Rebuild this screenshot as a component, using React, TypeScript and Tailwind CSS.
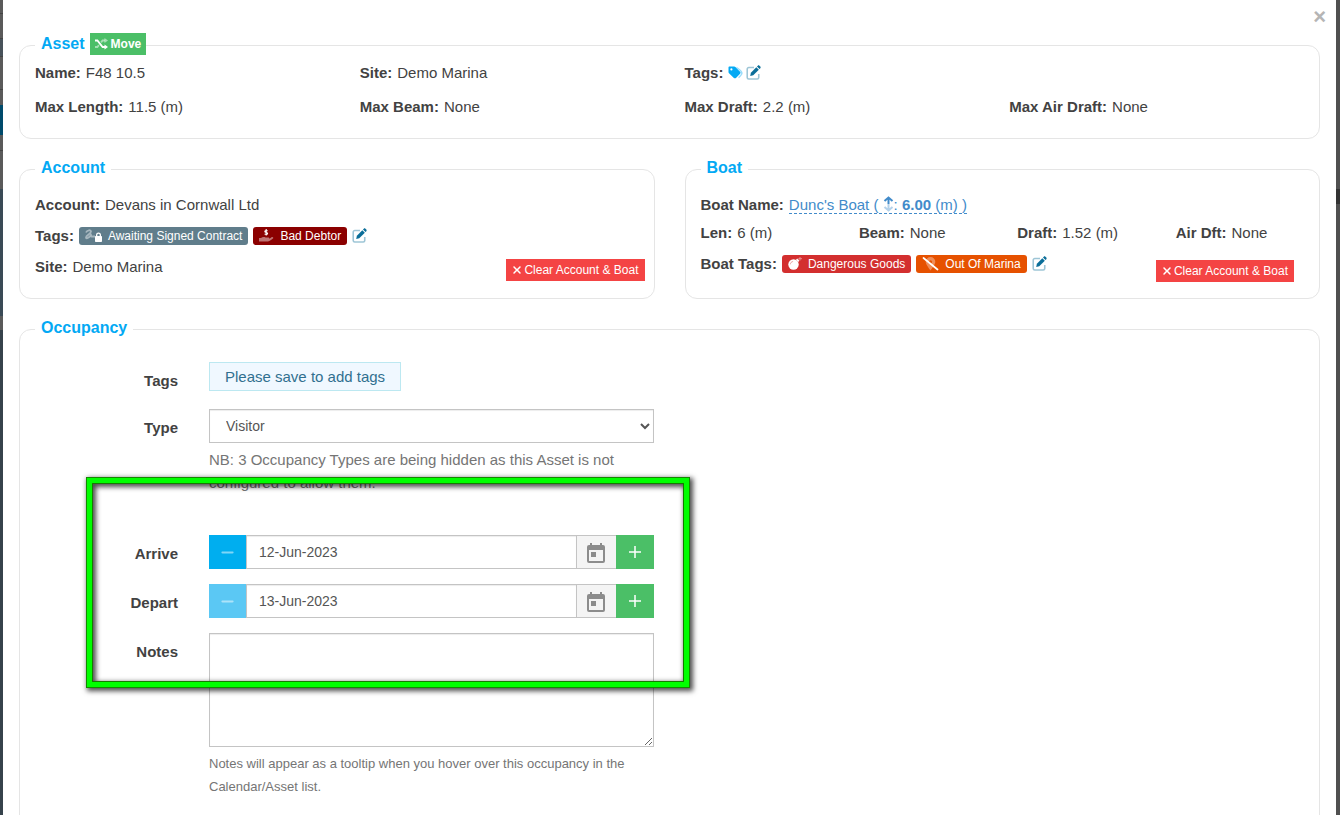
import type { ReactNode } from 'react';
import { FaXmark, FaMinus } from 'react-icons/fa6';

const panel = 'min-w-0 rounded-[12px] border border-[#e5e5e5] pb-4';
const label = 'text-right text-[15px] leading-[23px] font-bold';
const field = 'border border-[#c4c4c4] bg-white text-[14px] text-[#555] shadow-[inset_0_1px_1px_rgba(0,0,0,0.075)] outline-none';

function Legend({ children }: { children: ReactNode }) {
  return (
    <legend className="ml-[15px] flex h-6 items-start gap-[5px] px-[6px] text-[16px] leading-[21px] font-bold text-[#03a9f4]">
      {children}
    </legend>
  );
}

function Fact({ name, children }: { name: string; children: ReactNode }) {
  return (
    <div className="flex items-center gap-[5px] px-[15px]">
      <b>{name}:</b>
      {children}
    </div>
  );
}

function ShuffleIcon() {
  return (
    <svg viewBox="0 0 13 12" className="h-3 w-[13px]" fill="none" stroke="currentColor" strokeWidth="1.8">
      <path d="M0 9h2.400l1.500-1.800M6.100 4.400 7.600 2.500H10" opacity=".5" />
      <path d="M9.500 0 13 2.500 9.500 5z" fill="currentColor" stroke="none" opacity=".5" />
      <path d="M0 2.500h2.400L7.600 9H10" />
      <path d="M9.500 6.500 13 9l-3.500 2.500z" fill="currentColor" stroke="none" />
    </svg>
  );
}

function TagsIcon() {
  return (
    <svg viewBox="0 0 15 13" className="h-[13px] w-[15px]" fill="#03a9f4">
      <path d="M8.500 .8c3 1.700 5.900 4 6.200 6.200.1 1.500-2 3.500-3.700 5.200l-.9-.9c1.600-1.600 3.100-3.200 3-4.300C12.900 5.500 10.500 3.500 8.500 2z" opacity=".4" />
      <path fillRule="evenodd" d="M.5 1.500C.5.900.9.500 1.500.500h4.700c.5 0 .9.200 1.200.500l4.700 4.700c.6.600.6 1.500 0 2.100l-4.100 4.100c-.6.600-1.500.600-2.100 0L1 7.200C.7 6.900.5 6.500.5 6zM3.400 2.300a1.100 1.100 0 1 0 0 2.200 1.100 1.100 0 0 0 0-2.200z" />
    </svg>
  );
}

function EditIcon() {
  return (
    <svg viewBox="0 0 16 16" className="h-[15px] w-[15px]" fill="none">
      <path d="M8.500 2.700H3A1.700 1.700 0 0 0 1.300 4.400v8.900A1.700 1.700 0 0 0 3 15h8.900a1.700 1.700 0 0 0 1.700-1.700V9.500" stroke="#0b6e99" strokeOpacity=".4" strokeWidth="1.700" />
      <path d="m11 2.300 2.700 2.700-6 6L4.500 11.700 5.200 8.300z" fill="#0b6e99" />
      <path d="m11.700 1.600.9-.9c.5-.5 1.200-.5 1.700 0l1 1c.5.500.5 1.200 0 1.700l-.9.900z" fill="#0b6e99" />
    </svg>
  );
}

function EditTags({ name }: { name: string }) {
  return (
    <button type="button" aria-label={name} className="cursor-pointer">
      <EditIcon />
    </button>
  );
}

function SignatureLockIcon() {
  return (
    <svg viewBox="0 0 17 13" className="h-[13px] w-[17px]">
      <path d="M1 3.500C2 1 6 .5 6 2.500 6 5 1 6.500 1 8.500c0 2 4-.5 5-2.500.5 1 0 2 1.500 1.500H10" fill="none" stroke="#fff" strokeWidth="1.800" opacity=".45" />
      <path fillRule="evenodd" d="M11 7V6a2.500 2.500 0 0 1 5 0v1c.6 0 1 .4 1 1v4c0 .6-.4 1-1 1h-5c-.6 0-1-.4-1-1V8c0-.6.4-1 1-1zm1.300 0h2.400V6a1.200 1.200 0 0 0-2.400 0z" fill="#fff" />
    </svg>
  );
}

function HandDollarIcon() {
  return (
    <svg viewBox="0 0 15 13" className="h-[13px] w-[15px]">
      <path d="M0 9h2c1.500-1.200 3-1.300 4.500-.6h3c.9 0 .9 1.400 0 1.400H7.500c2 .3 3.500-.5 5-1.600 1.200-.9 2.400.5 1.400 1.400-1.600 1.300-3 2.600-4.900 3H0z" fill="#fff" opacity=".45" />
      <path d="M8.700 1.900C7.700 1.300 5.800 1.200 5.800 2.400c0 1.300 2.800.8 2.800 2 0 1.300-2 1.100-3 .6M7.200 0v6.500" stroke="#fff" strokeWidth="1.100" fill="none" />
    </svg>
  );
}

function BombIcon() {
  return (
    <svg viewBox="0 0 14 14" className="h-[14px] w-[14px]" fill="#fff">
      <circle cx="5.500" cy="7.500" r="5.200" />
      <path d="m8 2.800 1.200-1.200L11.400 3.800 10.200 5z" />
      <path d="m10.500 2 1.300-.6M12 0v3.500M14 1.700h-3.500" stroke="#fff" strokeWidth="1" opacity=".45" />
      <path d="M2.400 7.300c0-1.500 1-2.700 2.700-2.800" stroke="#d32f2f" strokeWidth=".8" fill="none" opacity=".5" />
    </svg>
  );
}

function LocationSlashIcon() {
  return (
    <svg viewBox="0 0 17 14" className="h-[14px] w-[17px]">
      <path fillRule="evenodd" d="M8.500 0a4.800 4.800 0 0 1 4.800 4.800c0 2.500-3 6.200-4.800 8.700C6.700 11 3.700 7.300 3.700 4.800A4.800 4.800 0 0 1 8.500 0zm0 3.200a1.600 1.600 0 1 0 0 3.200 1.600 1.600 0 0 0 0-3.200z" fill="#fff" opacity=".35" />
      <path d="m1.500 1 14 11.500" stroke="#fff" strokeWidth="1.700" strokeLinecap="round" />
    </svg>
  );
}

function CalendarIcon() {
  return (
    <svg viewBox="0 0 18 20" className="h-5 w-[18px]" fill="#8c8c8c">
      <path fillRule="evenodd" d="M3 0h2v2h8V0h2v2h1a2 2 0 0 1 2 2v14a2 2 0 0 1-2 2H2a2 2 0 0 1-2-2V4a2 2 0 0 1 2-2h1zM2 7v11h14V7z" />
      <path d="M4 9h5v5H4z" />
    </svg>
  );
}

function Badge({ color, icon, children }: { color: string; icon: ReactNode; children: ReactNode }) {
  return (
    <span className={`flex h-[18px] items-center gap-[6px] rounded-[3px] px-[6px] text-[12px] leading-[18px] whitespace-nowrap text-white ${color}`}>
      {icon}
      {children}
    </span>
  );
}

function ClearButton() {
  return (
    <button type="button" className="flex h-[22px] cursor-pointer items-center gap-[2px] bg-[#f44444] px-[6px] text-[12px] leading-[22px] whitespace-nowrap text-white">
      <FaXmark className="h-[12px] w-[10px]" />
      Clear Account &amp; Boat
    </button>
  );
}

function DateRow({ id, name, value, minus }: { id: string; name: string; value: string; minus: string }) {
  return (
    <>
      <label htmlFor={id} className={`${label} pt-[7px]`}>{name}</label>
      <div className="mb-[15px] flex h-[34px]">
        <button type="button" aria-label={`${name} one day earlier`} className={`flex w-[37px] items-center justify-center text-white ${minus}`}>
          <FaMinus className="h-[15px] w-[15px] opacity-50" />
        </button>
        <input id={id} defaultValue={value} className={`${field} min-w-0 flex-1 px-3`} />
        <button type="button" aria-label={`Pick ${name} date`} className="flex w-[39px] items-center justify-center border-y border-[#c4c4c4] bg-[#f4f4f4] pt-[2px]">
          <CalendarIcon />
        </button>
        <button type="button" aria-label={`${name} one day later`} className="flex w-[38px] items-center justify-center bg-[#4bbf67] text-white">
          <svg viewBox="0 0 12 12" className="h-3 w-3" stroke="currentColor" strokeWidth="1.500">
            <path d="M6 0v12M0 6h12" />
          </svg>
        </button>
      </div>
    </>
  );
}

export default function App() {
  return (
    <div className="flex h-screen overflow-hidden font-['Liberation_Sans',Arial,sans-serif] text-[15px] leading-[23px] text-[#424242]">
      <div className="flex w-[3px] shrink-0 flex-col bg-[#36424b]">
        <div className="h-[14px] border-b border-[#444] bg-[#5a5a5a]" />
        <div className="h-[25px] border-b border-[#444] bg-[#5a5a5a]" />
        <div className="h-[18px] border-b border-[#444] bg-[#48525a]" />
        <div className="h-[33px] border-b border-[#444] bg-[#5a5a5a]" />
        <div className="h-[15px] bg-[#5a5a5a]" />
        <div className="h-[30px] bg-[#004a6b]" />
        <div className="h-[16px] border-b border-[#444] bg-[#5a5a5a]" />
        <div className="h-[38px] bg-[#5a5a5a]" />
        <div className="h-[127px] bg-[#3a4a56]" />
        <div className="h-[14px] bg-[#5a5a5a]" />
      </div>
      <main className="relative min-w-0 flex-1 bg-white px-4">
        <header className="flex h-[33px] justify-end">
          <button type="button" aria-label="Close" className="-mr-[6px] h-[33px] text-[22px] font-bold text-[#b5b5b5]">×</button>
        </header>

        <fieldset className={panel}>
          <Legend>
            Asset
            <button type="button" className="-mr-[6px] flex h-[22px] items-center gap-[3px] bg-[#4bbf67] px-[5px] text-[12px] font-bold text-white">
              <ShuffleIcon />
              Move
            </button>
          </Legend>
          <div className="grid grid-cols-4 gap-y-[11px] pt-1 pb-1">
            <Fact name="Name">F48 10.5</Fact>
            <Fact name="Site">Demo Marina</Fact>
            <div className="col-span-2">
              <Fact name="Tags">
                <span className="flex items-center gap-[3px]">
                  <TagsIcon />
                  <EditTags name="Edit asset tags" />
                </span>
              </Fact>
            </div>
            <Fact name="Max Length">11.5 (m)</Fact>
            <Fact name="Max Beam">None</Fact>
            <Fact name="Max Draft">2.2 (m)</Fact>
            <Fact name="Max Air Draft">None</Fact>
          </div>
        </fieldset>

        <div className="mt-[18px] grid grid-cols-2 gap-[30px]">
          <fieldset className={panel}>
            <Legend>Account</Legend>
            <div className="flex flex-col gap-2 pt-3">
              <Fact name="Account">Devans in Cornwall Ltd</Fact>
              <Fact name="Tags">
                <span className="flex items-center gap-[5px]">
                  <Badge color="bg-[#607d8b]" icon={<SignatureLockIcon />}>Awaiting Signed Contract</Badge>
                  <Badge color="bg-[#8b0000]" icon={<HandDollarIcon />}>Bad Debtor</Badge>
                  <EditTags name="Edit account tags" />
                </span>
              </Fact>
              <div className="flex items-start justify-between pr-[9px]">
                <Fact name="Site">Demo Marina</Fact>
                <div className="pt-1"><ClearButton /></div>
              </div>
            </div>
          </fieldset>

          <fieldset className={panel}>
            <Legend>Boat</Legend>
            <div className="flex flex-col pt-3">
              <Fact name="Boat Name">
                <a href="#boat" className="border-b border-dashed border-[#428bca] leading-[17px] text-[#428bca]">
                  Dunc's Boat ({' '}
                  <svg viewBox="0 0 11 16" className="-mt-[3px] inline h-4 w-[11px]" fill="none" stroke="currentColor" strokeWidth="2">
                    <path d="M1.500 5 5.500 1.500l4 3.500M5.500 2V8" />
                    <path d="M5.500 8v6M1.500 11l4 3.500 4-3.500" opacity=".4" />
                  </svg>
                  : <b>6.00</b> (m) )
                </a>
              </Fact>
              <div className="mt-[5px] grid grid-cols-4">
                <Fact name="Len">6 (m)</Fact>
                <Fact name="Beam">None</Fact>
                <Fact name="Draft">1.52 (m)</Fact>
                <Fact name="Air Dft">None</Fact>
              </div>
              <div className="mt-2 flex items-start justify-between pr-[25px]">
                <Fact name="Boat Tags">
                  <span className="flex items-center gap-[5px]">
                    <Badge color="bg-[#d32f2f]" icon={<BombIcon />}>Dangerous Goods</Badge>
                    <Badge color="bg-[#e65100]" icon={<LocationSlashIcon />}>Out Of Marina</Badge>
                    <EditTags name="Edit boat tags" />
                  </span>
                </Fact>
                <div className="pt-2"><ClearButton /></div>
              </div>
            </div>
          </fieldset>
        </div>

        <fieldset className={`${panel} mt-[18px]`}>
          <Legend>Occupancy</Legend>
          <div className="grid w-1/2 grid-cols-[143px_1fr] gap-x-[31px] pt-[21px] pr-4 pb-10 pl-[15px]">
            <div className={`${label} pt-[7px]`}>Tags</div>
            <div className="mb-[18px] flex">
              <p className="h-[29px] border border-[#bce8f1] bg-[#f0f8ff] px-[15px] leading-[27px] text-[#31708f]">Please save to add tags</p>
            </div>

            <label htmlFor="type" className={`${label} pt-[7px]`}>Type</label>
            <div className="mb-[41px]">
              <select id="type" className={`${field} h-[34px] w-full px-3`}>
                <option>Visitor</option>
              </select>
              <p className="mt-[5px] text-[#757575]">NB: 3 Occupancy Types are being hidden as this Asset is not configured to allow them.</p>
            </div>

            <DateRow id="arrive" name="Arrive" value="12-Jun-2023" minus="bg-[#00aeef]" />
            <DateRow id="depart" name="Depart" value="13-Jun-2023" minus="bg-[#5bc8f4]" />

            <label htmlFor="notes" className={`${label} pt-[7px]`}>Notes</label>
            <div>
              <textarea id="notes" className={`${field} block h-[114px] w-full px-3 py-[6px]`} />
              <p className="mt-[5px] text-[13px] text-[#757575]">Notes will appear as a tooltip when you hover over this occupancy in the Calendar/Asset list.</p>
            </div>
          </div>
        </fieldset>

        <div className="pointer-events-none absolute top-[477px] left-[83px] h-[211px] w-[604px] border border-[#128a00] shadow-[2px_2px_5px_1px_rgba(0,0,0,0.7)]">
          <div className="h-full border-[5px] border-[#00ff00]">
            <div className="h-full border border-[#157a00] shadow-[inset_2px_2px_5px_1px_rgba(0,0,0,0.7)]" />
          </div>
        </div>
      </main>
      <div className="flex w-1 shrink-0 flex-col bg-[#505050] pt-[189px]">
        <div className="h-[15px] bg-[#333]" />
      </div>
    </div>
  );
}
